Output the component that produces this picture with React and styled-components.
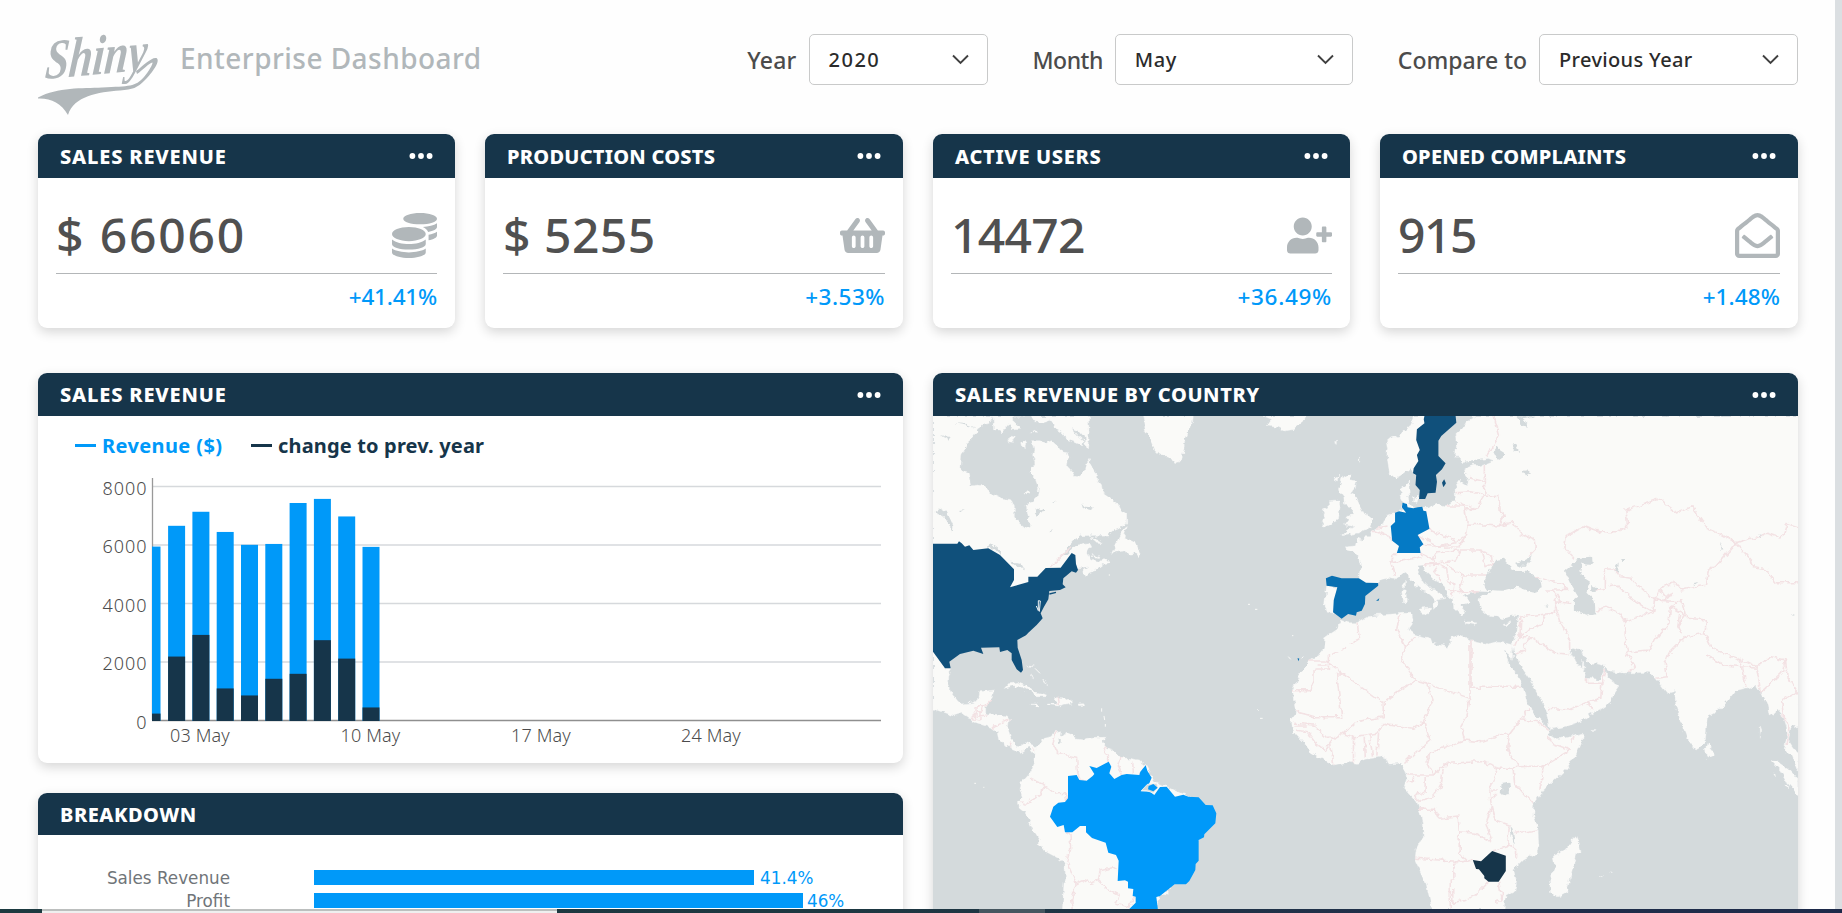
import React from "react";
import styled, { createGlobalStyle } from "styled-components";
import { FaCoins, FaShoppingBasket, FaUserPlus, FaRegEnvelopeOpen } from "react-icons/fa";

const GlobalStyle = createGlobalStyle`
  * { box-sizing: border-box; }
  body {
    margin: 0;
    overflow: hidden;
    background: #fefefe;
    font-family: "Noto Sans", "Open Sans", sans-serif;
  }
`;

const navy = "#16354a";
const blue = "#0099f9";
const grey = "#b1b7ba";

const Screen = styled.div`
  height: 913px;
  display: grid;
  grid-template-columns: 1fr 7px;
  grid-template-rows: 909px 4px;
  overflow: hidden;
`;

const Page = styled.div`
  padding: 34px 37px 0 38px;
  overflow: hidden;
`;

const ScrollTrack = styled.div`
  background: #dbdfe2;
`;

const TaskStrip = styled.div`
  grid-column: 1 / -1;
  display: flex;
  background: linear-gradient(90deg, #1c3a40 0, #1d3841 45%, #20304a 75%, #1d2a4a 100%);
`;

const StripItem = styled.div`
  width: ${(p) => p.$width}px;
  margin-left: ${(p) => p.$gap}px;
  background: ${(p) => p.$color};
  border-top: ${(p) => (p.$edge ? "2px solid #bcbfbe" : "none")};
`;

const TopBar = styled.header`
  display: flex;
  align-items: flex-start;
  height: 100px;
`;

const Logo = styled.svg`
  width: 122px;
  height: 84px;
  flex: none;
  overflow: visible;
`;

const Title = styled.h1`
  margin: 0 0 0 20px;
  font-size: 28px;
  font-weight: 500;
  line-height: 49px;
  letter-spacing: 0.47px;
  color: ${grey};
`;

const Filters = styled.div`
  margin-left: auto;
  display: flex;
  gap: 45px;
`;

const Filter = styled.label`
  display: flex;
  align-items: center;
  gap: 12px;
  height: 51px;
  font-size: 23px;
  font-weight: 500;
  letter-spacing: ${(p) => p.$spacing || 0}px;
  white-space: nowrap;
  color: #4b4b4b;
`;

const SelectBox = styled.div`
  width: ${(p) => p.$width}px;
  height: 51px;
  border: 1px solid #c9caca;
  border-radius: 5px;
  background: #fff;
  padding: 0 18px 0 19px;
  display: flex;
  align-items: center;
  justify-content: space-between;
  font-size: 20px;
  letter-spacing: ${(p) => p.$spacing}px;
  color: #2b2b2b;
`;

const StatGrid = styled.section`
  display: grid;
  grid-template-columns: 417fr 418fr 417fr 418fr;
  gap: 30px;
`;

const PanelGrid = styled.section`
  display: grid;
  grid-template-columns: 1fr 1fr;
  gap: 30px;
  margin-top: 45px;
`;

const Column = styled.div`
  display: flex;
  flex-direction: column;
  gap: 30px;
`;

const Card = styled.article`
  height: ${(p) => p.$height}px;
  border-radius: 9px;
  background: #fff;
  overflow: hidden;
  box-shadow: 0 4px 12px rgba(0, 0, 0, 0.16);
`;

const CardHeader = styled.div`
  height: ${(p) => p.$height}px;
  padding: 0 22px;
  display: flex;
  align-items: center;
  justify-content: space-between;
  background: ${navy};
  color: #fff;
  font-size: 20px;
  font-weight: 800;
  letter-spacing: ${(p) => p.$spacing || 0}px;
`;

const StatBody = styled.div`
  padding: 0 18px;
`;

const StatMain = styled.div`
  height: 96px;
  padding-top: 20px;
  display: flex;
  align-items: center;
  justify-content: space-between;
  border-bottom: 1px solid #b3b6b8;
  color: ${grey};
`;

const StatValue = styled.div`
  padding-bottom: 2px;
  line-height: 60px;
  font-size: 48px;
  font-weight: 500;
  letter-spacing: ${(p) => p.$spacing}px;
  color: #505050;
`;

const StatChange = styled.div`
  text-align: right;
  line-height: 46px;
  font-size: 22.5px;
  font-weight: 500;
  letter-spacing: ${(p) => p.$spacing}px;
  color: ${blue};
`;

const Chart = styled.svg`
  display: block;
  width: 100%;
  height: ${(p) => p.$height}px;
`;

const AxisText = styled.text`
  font-family: "Noto Sans", sans-serif;
  font-weight: 300;
  font-size: 18px;
  fill: #4c4c4c;
  letter-spacing: ${(p) => p.$spacing || 0}px;
`;

const LegendText = styled.text`
  font-weight: 700;
  font-size: 20px;
`;

const BreakdownBody = styled.div`
  padding-top: 35px;
  display: grid;
  row-gap: 8px;
`;

const BreakdownRow = styled.div`
  display: flex;
  align-items: center;
  height: 15px;
  font-family: "DejaVu Sans", sans-serif;
  font-size: 16.8px;
  color: #707579;
`;

const BreakdownLabel = styled.div`
  width: 192px;
  margin-right: 84px;
  text-align: right;
  white-space: nowrap;
`;

const BreakdownBar = styled.div`
  height: 15px;
  width: ${(p) => p.$value * 10.63}px;
  background: ${blue};
`;

const BreakdownValue = styled.div`
  margin-left: ${(p) => p.$gap}px;
  color: ${blue};
`;

const Dots = () => (
  <svg width="24" height="8" viewBox="0 0 24 8" fill="#fff">
    <circle cx="3.4" cy="4" r="2.9" />
    <circle cx="12" cy="4" r="2.9" />
    <circle cx="20.6" cy="4" r="2.9" />
  </svg>
);

const Chevron = () => (
  <svg width="17" height="11" viewBox="0 0 17 11" fill="none" stroke="#404040" strokeWidth="1.9">
    <path d="M1 1.5 8.5 9 16 1.5" />
  </svg>
);

const stats = [
  { title: "SALES REVENUE", value: "$ 66060", change: "+41.41%", Icon: FaCoins, tracking: [0.82, 1.85, -0.2] },
  { title: "PRODUCTION COSTS", value: "$ 5255", change: "+3.53%", Icon: FaShoppingBasket, tracking: [0.24, 0.5, 0.5] },
  { title: "ACTIVE USERS", value: "14472", change: "+36.49%", Icon: FaUserPlus, tracking: [0.68, -0.7, 0.7] },
  { title: "OPENED COMPLAINTS", value: "915", change: "+1.48%", Icon: FaRegEnvelopeOpen, tracking: [0.24, -1.5, 0.1] },
];

const bars = [
  [5970, 260], [6680, 2210], [7160, 2950], [6470, 1120], [6030, 880],
  [6060, 1450], [7460, 1620], [7600, 2770], [7000, 2140], [5960, 470],
];

const yTicks = [8000, 6000, 4000, 2000, 0];
const xTicks = [["03 May", 162], ["10 May", 332.5], ["17 May", 503], ["24 May", 673]];
const yOf = (v) => 304.5 - v * 0.02925;
const barTop = (v) => yOf(v) + 0.7;

const RevenueChart = () => (
  <Chart $height={347} viewBox="0 0 865 347">
    <path d="M37 29.5H58" stroke={blue} strokeWidth="3" />
    <LegendText x="64" y="37" fill={blue} textLength="120">Revenue ($)</LegendText>
    <path d="M213 29.5H234" stroke={navy} strokeWidth="3" />
    <LegendText x="240" y="37" fill={navy} textLength="206">change to prev. year</LegendText>
    {yTicks.map((t) => (
      <g key={t}>
        <path d={`M114 ${yOf(t)}H843`} stroke={t ? "#d6d9dc" : "#8f8f8f"} strokeWidth="1.3" />
        <AxisText x="109.5" y={yOf(t) + 8.2} textAnchor="end" $spacing={1}>{t}</AxisText>
      </g>
    ))}
    <path d="M114.5 62V304" stroke="#999" strokeWidth="1.3" />
    {bars.map(([total, diff], i) => {
      const x = Math.max(114, 105.8 + i * 24.3);
      const w = i ? 17 : 8.5;
      return (
        <g key={i}>
          <rect x={x} y={barTop(total)} width={w} height={305 - barTop(total)} fill={blue} />
          <rect x={x} y={barTop(diff)} width={w} height={305 - barTop(diff)} fill={navy} />
        </g>
      );
    })}
    {xTicks.map(([t, x]) => (
      <AxisText key={t} x={x} y="326" textAnchor="middle" $spacing={0.15}>{t}</AxisText>
    ))}
  </Chart>
);

const pts = (list) => list.map((p, i) => <polygon key={i} points={p} />);

const westLand = [
  "39,48 222,48 215,65 195,70 180,80 172,92 160,112 148,122 140,130 125,165 122,212 145,220 152,258 175,255 188,257 205,270 218,284 245,298 275,302 283,320 283,348 300,372 315,385 328,378 328,365 322,335 318,315 335,308 352,290 356,265 345,235 330,218 345,190 338,165 342,150 335,122 360,122 375,130 395,122 412,138 425,155 442,158 446,170 442,198 452,210 460,224 475,228 493,215 498,190 507,175 518,200 522,215 532,225 533,240 545,255 548,280 570,295 580,305 600,320 606,332 620,342 620,372 600,384 585,389 565,405 480,407 462,420 440,445 425,470 440,466 470,435 505,428 512,440 503,457 515,480 545,486 555,472 568,488 552,492 530,510 508,518 495,530 488,515 505,500 474,503 450,500 400,540 350,580 330,640 39,640",
  "610,388 622,380 612,410 625,418 648,430 660,460 655,472 645,460 625,464 618,452 578,457 590,430",
  "512,412 532,418 546,428 530,427", "516,460 524,468 541,463 538,473 520,470",
  "385,48 505,48 507,90 508,100 498,105 508,125 505,150 495,128 492,110 480,95 455,85 470,105 490,122 488,137 462,125 445,120 425,98 404,85 398,68",
  "222,48 335,48 345,65 370,68 395,60 395,48 280,48 282,72 302,80 300,88 278,90 268,72 245,102 238,90 224,90",
  "262,125 272,108 286,112 275,127", "308,128 316,120 320,135 312,143", "335,95 350,88 352,97", "315,280 325,270 328,276 320,285",
  "668,48 676,90 692,122 705,152 720,167 748,168 760,185 775,190 785,178 796,118 806,95 818,65 820,48",
  "1030,48 1055,58 1042,78 1072,82 1095,93 1122,88 1150,65 1158,48",
  "39,750 75,805 92,805 83,830 83,855 92,875 110,900 125,912 160,908 175,900 180,875 222,870 215,895 200,920 200,945 230,943 262,948 268,957 264,990 272,1015 288,1035 305,1038 320,1028 340,1036 350,1045 345,1066 325,1040 302,1057 268,1042 240,1023 235,1000 212,982 165,967 125,940 100,948 39,926",
  "252,866 265,852 290,847 320,858 345,875 383,885 378,890 350,890 340,878 310,862 282,857 265,862",
  "385,912 412,912 402,893 435,893 458,908 430,913 420,918 385,914", "335,912 350,912 357,917 345,919", "474,912 490,911 495,915 476,917",
  "332,820 341,838 334,828", "320,797 332,795 345,800 328,799", "368,838 376,848 386,854 374,850",
  "345,1066 350,1042 370,1015 392,1010 408,995 422,992 420,1005 436,1007 438,997 452,1003 470,1017 490,1020 520,1015 555,1015 545,1025 560,1043 582,1052 603,1073 625,1075 658,1080 676,1096 705,1145 860,1215 840,1300 820,1400 760,1458 712,1500 714,1530 427,1530 432,1450 437,1440 435,1390 415,1375 378,1355 358,1332 359,1320 342,1292 328,1262 312,1236 298,1225 295,1205 307,1190 300,1170 303,1150 318,1133 332,1118 345,1085",
];

const eastLand = [
  "375,48 365,75 330,108 308,115 297,125 300,145 298,165 305,215 325,235 340,225 365,205 371,218 400,180 420,48",
  "545,48 520,65 510,85 490,105 492,140 490,165 510,188 545,182 580,175 598,182 580,190 562,197 540,196 518,205 515,215 525,232 520,258 508,250 502,240 488,260 490,305 475,307 460,320 435,313 410,325 375,325 357,310 355,290 366,275 365,258 360,245 338,265 335,290 345,310 340,330 322,338 300,345 290,372 258,390 253,410 235,410 230,424 215,418 210,438 183,440 185,450 205,455 220,475 225,495 220,535 180,560 210,575 274,552 275,540 300,535 320,538 345,515 358,525 370,548 395,570 410,575 425,590 432,600 428,625 441,612 436,598 460,592 440,575 425,572 400,545 385,515 385,497 400,495 405,515 425,535 455,552 467,575 470,590 482,600 485,620 500,635 508,648 515,635 505,615 532,605 512,588 550,574 578,575 590,580 560,588 555,600 562,630 578,645 605,648 620,656 645,647 667,647 660,700 648,730 655,765 675,800 700,838 712,870 735,910 747,940 755,988 800,978 835,965 865,945 895,928 920,910 930,885 948,858 928,846 912,830 908,808 893,838 855,835 846,815 848,808 832,798 818,775 808,755 820,745 840,752 850,772 875,790 905,797 918,812 960,819 1030,817 1042,830 1062,855 1080,880 1098,875 1100,862 1105,920 1118,965 1135,1015 1155,1045 1163,1047 1187,1022 1192,950 1218,935 1250,900 1270,872 1310,862 1325,852 1345,885 1360,918 1365,945 1388,930 1400,945 1415,1000 1407,1050 1430,1070 1450,1125 1450,1065 1430,1040 1418,1020 1425,985 1450,978 1460,48",
  "172,660 190,668 215,668 245,650 280,645 340,640 365,640 368,660 358,690 375,703 420,715 425,730 468,742 475,735 478,712 500,706 530,722 580,735 610,727 640,732 650,735 648,778 640,765 624,750 640,790 665,830 680,870 690,912 708,935 718,952 738,972 752,988 748,1003 768,1016 800,1013 845,1000 840,1030 825,1065 800,1105 760,1145 735,1170 708,1210 705,1250 720,1290 722,1345 715,1360 680,1380 652,1410 660,1445 655,1475 628,1492 625,1530 425,1530 408,1452 377,1380 380,1350 400,1308 398,1275 392,1240 382,1208 345,1165 355,1130 350,1110 338,1092 305,1095 298,1075 285,1070 240,1078 215,1090 190,1086 150,1095 125,1082 85,1055 72,1035 45,1005 35,990 32,960 42,945 45,925 35,870 52,830 82,782 105,768 122,745 125,710 160,685",
  "825,1310 832,1330 837,1355 828,1360 800,1475 775,1490 755,1475 752,1440 767,1408 762,1365 795,1350 812,1325",
  "1192,1028 1208,1050 1210,1065 1190,1075 1187,1045", "1370,1082 1388,1086 1420,1108 1450,1145 1450,1190 1415,1148 1395,1110",
  "175,228 185,222 200,222 192,242 214,245 210,262 195,282 212,292 225,322 240,350 257,358 250,385 215,400 172,408 190,390 205,382 178,378 190,360 183,350 200,345 202,320 180,315 178,290 163,270 170,250",
  "135,305 165,303 168,315 163,360 122,380 115,375 125,350 115,330 137,320",
  "130,555 165,560 152,642 132,640 125,610", "385,628 420,624 418,645 400,640", "340,575 352,572 352,608 342,608", "342,550 350,543 350,568 345,566",
  "516,664 550,669 540,674 518,670", "622,674 645,665 632,680", "370,295 386,285 382,308 370,304",
  "150,235 164,225 160,240", "220,170 224,168 222,190", "152,125 158,124 156,133", "845,780 850,788 850,808 843,803",
  "870,988 884,989 876,992", "1340,978 1344,990 1340,1015", "1378,1118 1386,1122 1384,1128", "1410,1155 1420,1160 1418,1170",
  "896,1428 902,1426 899,1431", "920,1415 926,1418 922,1421",
];

const westWater = [
  "47,335 62,325 80,335 92,360 100,378 98,400 88,375 70,345 50,342", "200,440 215,432 240,450 246,472 225,448", "270,485 300,488 312,508 288,498",
  "342,333 360,325 378,335 360,338 352,347", "484,308 495,320 525,322 512,330 490,325", "388,400 402,385 395,398", "395,305 410,300 400,308", "120,330 134,328 126,335", "60,105 85,112 86,122", "102,70 140,72 170,85 135,76", "415,1015 426,1025 418,1035",
];

const eastWater = [
  "600,480 625,476 643,497 637,507 650,513 690,512 712,528 730,545 733,565 710,575 688,570 660,560 620,572 578,570 567,552 580,520",
  "655,492 672,486 688,478 703,465 692,488 686,500 670,500",
  "795,512 820,490 830,475 868,470 870,495 842,492 838,510 850,535 865,545 855,575 878,600 880,640 855,647 820,630 820,600 832,590 815,560",
  "595,155 605,142 625,155 625,170 608,182", "645,125 660,130 670,158 655,152", "655,48 672,70 688,80 690,68 676,58 700,55 716,50", "555,578 588,575 575,585",
  "868,555 885,565 880,580 868,575", "930,510 945,490 943,515", "952,480 965,480 955,490", "1150,550 1170,546 1158,555",
  "618,1152 640,1148 642,1170 630,1185 616,1180", "643,1270 650,1290 655,1335 647,1320", "663,1100 672,1118", "680,210 690,208 700,225 690,232", "1335,400 1348,402 1340,412", "1228,425 1240,448 1232,450", "773,615 782,635", "740,618 752,612 748,620", "1425,640 1437,645 1430,648",
];

const westBorders =
  "M388 503L422 470L455 440M212 903L160 950L200 945M200 920H168V935H180V960L155 955M268 957L240 970L218 985M268 1042L275 1028M345 1052L338 1042M410 995L398 1030L412 1060L470 1072L472 1110L480 1140L500 1142M566 1085L552 1055L560 1043M603 1073L595 1095L605 1125M638 1084L640 1120M676 1098L658 1125M330 1135L370 1152L405 1182L435 1180L440 1200M372 1155L365 1180L320 1213L303 1206M435 1297L450 1300L452 1345L440 1385L455 1420L468 1452L455 1500L460 1530M468 1452L490 1442L512 1450L535 1442L540 1412L580 1403L594 1412M535 1442L560 1465L598 1485L588 1510L630 1522L640 1490M415 890L418 915";

const eastBorders =
  "M597 48L612 108L575 170M570 196V240L572 285L610 290L615 335L628 345L608 378L525 372L520 405L502 440L440 442M530 235L570 245M488 278L535 275L572 285M492 305L545 328L570 285M462 318H515L522 370M515 330L545 328M608 378L650 365L670 400L712 418L715 445L692 470M417 388L445 402L495 425L520 408M384 405L430 430L440 440L495 428M400 433L420 435L436 442M392 459L425 475L440 455L500 450M326 459L315 470L312 488L340 482L365 478L392 470M310 485L322 525M258 390L305 410L310 420M268 385L300 378M425 475L432 490L400 495M432 490L490 480L505 450L560 450L575 500L595 490M560 450L590 470L592 485M405 495L440 492L465 505L470 545M440 500L430 515L450 540M465 490L480 510L510 525L578 525M500 520L510 545L500 575L470 570M470 545L485 552L480 590M500 575L555 575M712 530L760 545L790 550L800 568L775 570L740 570M757 570L772 585L765 605L810 610M775 585L785 610M667 650L765 640L768 605M765 605L780 660L808 720L808 750M740 640L728 675L665 705M665 710L700 710L770 760L808 762M700 712L680 740L685 750L655 762M672 650L670 700L655 740M820 475L795 440L798 410L850 378L890 395L940 395L970 380L965 330L1060 295L1085 320L1110 338L1150 320L1190 385L1225 400L1272 428L1215 500L1195 510L1190 555L1120 570L1100 545L1060 565L1045 600L1000 560L980 535L950 530L930 505L905 503V565L880 570M1062 570L1075 590L1100 580L1070 600L1050 595M920 560L940 555L980 595L1040 635L1045 600L1115 605L1090 620L1085 670L1045 720L1030 750L965 757L990 800L972 818M885 630L910 622L950 640L965 665L960 700L970 757M1040 635L965 665M1090 620L1125 640L1140 655L1190 660L1185 700L1130 710L1085 760L1075 790L1080 830L1050 835M1120 600L1130 640L1110 680L1120 700M1110 680L1115 645M1272 428L1360 400L1400 415L1415 370L1445 380M1272 428L1315 480L1320 500L1350 505L1385 548H1445M1185 700L1205 745L1285 780L1290 800L1240 795L1190 765M1290 780L1330 800L1370 770L1410 780L1400 820L1370 850L1340 878L1335 830L1330 805L1290 800L1300 860M1410 780L1415 830L1445 880M1400 900L1405 960L1420 980L1415 1035M1445 875L1400 900M130 785L275 900L288 905L378 840L340 780L350 740L375 710M215 668L222 715L195 735M185 742L172 750M160 755L145 763M335 645L325 690L350 740M80 783H130M105 795H130M135 765V807H95V840L82 872H35M158 822H180M158 822L172 950H97L45 935M288 905V950L240 960L210 965L175 1000L140 1020L95 975L40 970M378 840L410 850L530 895V722M533 722V862H675M410 850L427 900L400 965L370 985L290 970L270 1000L205 1010L175 1000M530 862V895L522 945L505 980L515 1020L560 1025L625 1000L640 1005L670 960L695 925M675 960L720 965L750 988M640 1005L635 1050L665 1100L735 1098L810 1050L760 1030L745 1005M735 1098L725 1170M815 1025L820 1010M515 1020L415 1060L410 1085L430 1125L465 1090L560 1085L610 1105H650L665 1100M400 965L420 1020L375 1060L345 1090M205 1010V1088M235 1010L238 1070M250 1005L258 1070M275 1000L270 1070M140 1020L150 1095M40 978H72M45 990L75 995L100 1030L125 1050L140 1030M355 1125H430M372 1130V1145H355M405 1130V1175L375 1185L385 1205L430 1190L450 1150L455 1110M385 1228H433L445 1255L497 1248L500 1295L545 1300L590 1325L575 1270L590 1220L585 1170L610 1105M650 1105L655 1150L705 1210M605 1170L590 1170M590 1195L605 1185M590 1220L600 1260L640 1275L635 1340L592 1353M655 1300L718 1290M377 1375L510 1385L538 1380M500 1295V1360L520 1383L485 1390V1440H475V1530M482 1470V1510L540 1490L580 1445M610 1445L620 1500H605V1512M660 1370V1345L635 1335M748 925L805 930L860 905L895 895L898 850L855 850L855 835M860 905L870 930M898 850L908 810";

const SalesMap = () => (
  <Chart $height={493} viewBox="0 0 865 493">
    <defs>
      <filter id="coast" filterUnits="userSpaceOnUse" x="-20" y="-20" width="905" height="533">
        <feTurbulence type="fractalNoise" baseFrequency="0.16" numOctaves="3" seed="4" result="noise" />
        <feDisplacementMap in="SourceGraphic" in2="noise" scale="6" xChannelSelector="R" yChannelSelector="G" />
      </filter>
    </defs>
    <rect width="865" height="493" fill="#d4dadc" />
    <g filter="url(#coast)">
      <g transform="translate(-13 -16) scale(.33333)">
        <g fill="#fafaf8" stroke="#fafaf8" strokeWidth="1">{pts(westLand)}</g>
        <g fill="#d4dadc">{pts(westWater)}</g>
        <path d={westBorders} fill="none" stroke="#f3e2e4" strokeWidth="4.5" strokeLinejoin="round" />
      </g>
      <g transform="translate(347 -16) scale(.35842 .33333)">
        <g fill="#fafaf8" stroke="#fafaf8" strokeWidth="1">{pts(eastLand)}</g>
        <g fill="#d4dadc">{pts(eastWater)}</g>
        <path d={eastBorders} fill="none" stroke="#f3e2e4" strokeWidth="4.5" strokeLinejoin="round" />
      </g>
    </g>
    <g transform="translate(-13 -16) scale(.33333)">
      <polygon fill="#10507b" points="39,431 112,431 117,424 125,430 135,440 148,436 160,450 205,445 240,465 282,508 282,540 270,562 325,546 325,530 352,530 377,504 422,503 455,459 466,465 468,492 474,510 468,518 455,514 430,535 428,553 437,562 420,570 388,573 385,598 372,620 362,640 368,655 350,675 325,698 318,706 292,720 293,743 305,780 309,810 303,818 290,808 275,780 275,760 262,750 240,756 238,742 183,743 190,762 160,752 120,762 88,785 92,805 75,805 39,755" />
      <path d="M349 618L355 632V602L361 603L358 635" fill="none" stroke="#eef2f4" strokeWidth="3" />
      <path d="M388 582L408 577" stroke="#10507b" strokeWidth="4" />
      <polygon fill={blue} points="444,1128 470,1125 478,1140 500,1142 518,1128 523,1122 508,1098 530,1104 566,1085 574,1100 568,1120 583,1137 605,1125 620,1122 658,1125 661,1115 677,1096 682,1112 695,1133 688,1150 662,1174 690,1175 703,1185 720,1161 740,1160 765,1190 790,1184 805,1190 836,1192 857,1215 878,1216 889,1240 886,1270 853,1303 852,1312 836,1320 836,1382 827,1392 826,1410 808,1443 798,1453 764,1453 720,1488 709,1491 714,1530 625,1530 647,1508 647,1490 638,1488 640,1467 624,1465 624,1445 615,1441 593,1443 596,1382 588,1365 565,1358 557,1328 516,1314 498,1297 498,1278 480,1278 457,1297 435,1297 431,1275 412,1281 390,1250 400,1220 415,1208 435,1206 444,1195" />
      <path d="M664 1172L682 1153L710 1150L714 1163L700 1179L680 1172Z" fill="#d4dadc" stroke="#fafaf8" strokeWidth="2" />
      <path d="M686 1158L700 1152L713 1163L700 1174L684 1168Z" fill={blue} />
      <path d="M545 925V935M552 948L554 960M556 972V980M1012 928L1016 932M1020 955H1028M1105 770L1112 778M1145 775L1150 770M163 1150H168M190 1162H193M984 613H990M1005 628H1012M1116 707H1120M345 805L360 820M568 523V527" stroke="#fafaf8" strokeWidth="3" />
    </g>
    <g transform="translate(347 -16) scale(.35842 .33333)">
      <polygon fill="#10507b" points="403,48 490,48 492,68 450,108 442,122 442,168 462,190 452,208 435,225 438,245 434,278 412,280 405,297 388,297 390,270 378,255 380,225 371,220 373,205 386,183 382,165 390,150 380,120 382,88 403,70 401,58" />
      <polygon fill="#10507b" points="452,248 458,238 463,250 456,262" />
      <polygon fill="#057ac5" points="342,308 354,312 356,322 372,325 385,322 397,320 400,332 408,334 417,386 384,405 400,433 390,442 392,459 326,459 332,438 313,422 309,378 321,366 321,338 332,334 352,338 340,322" />
      <polygon fill="#086fb1" points="128,535 145,527 172,535 220,535 240,548 274,549 274,557 238,588 237,612 228,632 214,637 212,647 190,642 172,656 148,637 150,600 160,562 130,557" />
      <polygon fill="#086fb1" points="268,602 277,595 275,602" />
      <polygon fill="#086fb1" points="49,774 54,776 51,784" />
      <polygon fill={navy} points="538,1380 561,1384 592,1353 630,1367 630,1413 610,1445 582,1445 570,1435 570,1428 555,1408 547,1407" />
    </g>
  </Chart>
);

export default function App() {
  return (
    <>
      <GlobalStyle />
      <Screen>
        <Page>
          <TopBar>
            <Logo viewBox="0 0 122 84" fill={grey}>
              <text
                transform="rotate(-5 6 44) skewX(-10)"
                x="14"
                y="45"
                fontFamily="Liberation Serif, serif"
                fontStyle="italic"
                fontWeight="700"
                fontSize="56"
                textLength="102"
                lengthAdjust="spacingAndGlyphs"
              >
                Shiny
              </text>
              <path d="M0 63.5C20 53 44 54.500 64 53.500C92 52 97 53 106 43C111 37 115 30 114.500 28.500C111 29 105 36 99 40L98 37C105 32 113 23 118.500 24C123 27 114 39 107 46C99 54 95 55.500 82 56.500C60 58 36 62 30 81C23 69 13 64 0 64.500Z" />
            </Logo>
            <Title>Enterprise Dashboard</Title>
            <Filters>
              <Filter $spacing={0.2}>Year<SelectBox $width={179} $spacing={1.5}>2020<Chevron /></SelectBox></Filter>
              <Filter $spacing={-0.5}>Month<SelectBox $width={238} $spacing={0.5}>May<Chevron /></SelectBox></Filter>
              <Filter>Compare to<SelectBox $width={259} $spacing={0.35}>Previous Year<Chevron /></SelectBox></Filter>
            </Filters>
          </TopBar>
          <StatGrid>
            {stats.map(({ title, value, change, Icon, tracking }) => (
              <Card key={title} $height={194}>
                <CardHeader $height={44} $spacing={tracking[0]}>{title}<Dots /></CardHeader>
                <StatBody>
                  <StatMain>
                    <StatValue $spacing={tracking[1]}>{value}</StatValue>
                    <Icon size={45} />
                  </StatMain>
                  <StatChange $spacing={tracking[2]}>{change}</StatChange>
                </StatBody>
              </Card>
            ))}
          </StatGrid>
          <PanelGrid>
            <Column>
              <Card $height={390}>
                <CardHeader $height={43} $spacing={0.82}>SALES REVENUE<Dots /></CardHeader>
                <RevenueChart />
              </Card>
              <Card $height={300}>
                <CardHeader $height={42} $spacing={0.5}>BREAKDOWN</CardHeader>
                <BreakdownBody>
                  <BreakdownRow>
                    <BreakdownLabel>Sales Revenue</BreakdownLabel>
                    <BreakdownBar $value={41.4} />
                    <BreakdownValue $gap={6}>41.4%</BreakdownValue>
                  </BreakdownRow>
                  <BreakdownRow>
                    <BreakdownLabel>Profit</BreakdownLabel>
                    <BreakdownBar $value={46} />
                    <BreakdownValue $gap={4}>46%</BreakdownValue>
                  </BreakdownRow>
                </BreakdownBody>
              </Card>
            </Column>
            <Card $height={720}>
              <CardHeader $height={43} $spacing={0.6}>SALES REVENUE BY COUNTRY<Dots /></CardHeader>
              <SalesMap />
            </Card>
          </PanelGrid>
        </Page>
        <ScrollTrack />
        <TaskStrip>
          <StripItem $gap={42} $width={515} $color="#efefef" $edge />
          <StripItem $gap={422} $width={66} $color="#465660" />
        </TaskStrip>
      </Screen>
    </>
  );
}
